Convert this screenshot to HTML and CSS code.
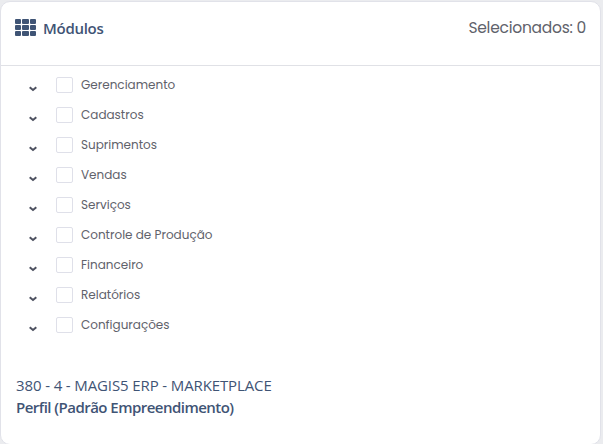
FILE: index.html
```html
<!DOCTYPE html>
<html lang="pt-BR">
<head>
  <meta charset="UTF-8" />
  <meta name="viewport" content="width=device-width, initial-scale=1" />
  <title>Módulos</title>
  <link rel="stylesheet" href="styles.css">
</head>
<body>

  <div class="card">
    <div class="card-header">
      <svg class="grid-icon" viewBox="0 0 21 17" aria-hidden="true">
        <path d="M1 0h4q1 0 1 1v3q0 1-1 1H1q-1 0-1-1V1q0-1 1-1zM8 0h5q1 0 1 1v3q0 1-1 1H8q-1 0-1-1V1q0-1 1-1zM16 0h4q1 0 1 1v3q0 1-1 1h-4q-1 0-1-1V1q0-1 1-1zM1 6h4q1 0 1 1v3q0 1-1 1H1q-1 0-1-1V7q0-1 1-1zM8 6h5q1 0 1 1v3q0 1-1 1H8q-1 0-1-1V7q0-1 1-1zM16 6h4q1 0 1 1v3q0 1-1 1h-4q-1 0-1-1V7q0-1 1-1zM1 12h4q1 0 1 1v3q0 1-1 1H1q-1 0-1-1v-3q0-1 1-1zM8 12h5q1 0 1 1v3q0 1-1 1H8q-1 0-1-1v-3q0-1 1-1zM16 12h4q1 0 1 1v3q0 1-1 1h-4q-1 0-1-1v-3q0-1 1-1z" />
      </svg>
      <h2 class="title">Módulos</h2>
      <span class="counter">Selecionados: 0</span>
    </div>

    <ul class="modules">
      <li><svg class="arrow" viewBox="0 0 8 6"><path d="M.7 1.2L4 4l3.3-2.8" /></svg><span class="check"></span><span class="name">Gerenciamento</span></li>
      <li><svg class="arrow" viewBox="0 0 8 6"><path d="M.7 1.2L4 4l3.3-2.8" /></svg><span class="check"></span><span class="name">Cadastros</span></li>
      <li><svg class="arrow" viewBox="0 0 8 6"><path d="M.7 1.2L4 4l3.3-2.8" /></svg><span class="check"></span><span class="name">Suprimentos</span></li>
      <li><svg class="arrow" viewBox="0 0 8 6"><path d="M.7 1.2L4 4l3.3-2.8" /></svg><span class="check"></span><span class="name">Vendas</span></li>
      <li><svg class="arrow" viewBox="0 0 8 6"><path d="M.7 1.2L4 4l3.3-2.8" /></svg><span class="check"></span><span class="name">Serviços</span></li>
      <li><svg class="arrow" viewBox="0 0 8 6"><path d="M.7 1.2L4 4l3.3-2.8" /></svg><span class="check"></span><span class="name">Controle de Produção</span></li>
      <li><svg class="arrow" viewBox="0 0 8 6"><path d="M.7 1.2L4 4l3.3-2.8" /></svg><span class="check"></span><span class="name">Financeiro</span></li>
      <li><svg class="arrow" viewBox="0 0 8 6"><path d="M.7 1.2L4 4l3.3-2.8" /></svg><span class="check"></span><span class="name">Relatórios</span></li>
      <li><svg class="arrow" viewBox="0 0 8 6"><path d="M.7 1.2L4 4l3.3-2.8" /></svg><span class="check"></span><span class="name">Configurações</span></li>
    </ul>

    <div class="profile">
      <div class="company">380 - 4 - MAGIS5 ERP - MARKETPLACE</div>
      <div class="profile-name">Perfil (Padrão Empreendimento)</div>
    </div>
  </div>

</body>
</html>
```
FILE: styles.css
```css
* {
  box-sizing: border-box;
}

body {
  margin: 0;
  padding: 1px 2px 0 0;
  height: 444px;
  overflow: hidden;
  background-color: #ebecef;
  font-family: Poppins, Inter, sans-serif;
  color: #5f626b;
}

.card {
  height: 444px;
  background-color: #fff;
  border: 1px solid #e1e2e9;
  border-radius: 10px;
}

.card-header {
  display: flex;
  align-items: center;
  height: 64px;
  padding: 0 14px 12px 14px;
  border-bottom: 1px solid #e0e1e6;
}

.grid-icon {
  width: 21px;
  height: 17px;
  margin-right: 7px;
  fill: #3f5475;
}

.title {
  margin: 0;
  font-family: 'Segoe UI', 'Open Sans', sans-serif;
  font-size: 15px;
  font-weight: 600;
  line-height: 20px;
  letter-spacing: -0.3px;
  color: #3f5475;
}

.counter {
  margin-left: auto;
  font-size: 15.5px;
  line-height: 20px;
  letter-spacing: -0.25px;
}

.modules {
  margin: 0;
  padding: 4px 0 0 28px;
  list-style: none;
}

.modules li {
  display: flex;
  align-items: center;
  height: 30px;
}

.arrow {
  width: 8px;
  height: 6px;
  margin: 7px 19px 0 0;
  fill: none;
  stroke: #4d5160;
  stroke-width: 2;
}

.check {
  width: 17px;
  height: 16px;
  margin-right: 8px;
  border: 1px solid #dfe0e9;
  border-radius: 2px;
}

.name {
  font-size: 12px;
  line-height: 18px;
}

.profile {
  padding: 34px 15px 0;
  font-family: 'Segoe UI', 'Open Sans', sans-serif;
  font-size: 15px;
  line-height: 22px;
  color: #3f5475;
}

.company {
  letter-spacing: -0.12px;
}

.profile-name {
  font-weight: 600;
  letter-spacing: -0.53px;
}
```
